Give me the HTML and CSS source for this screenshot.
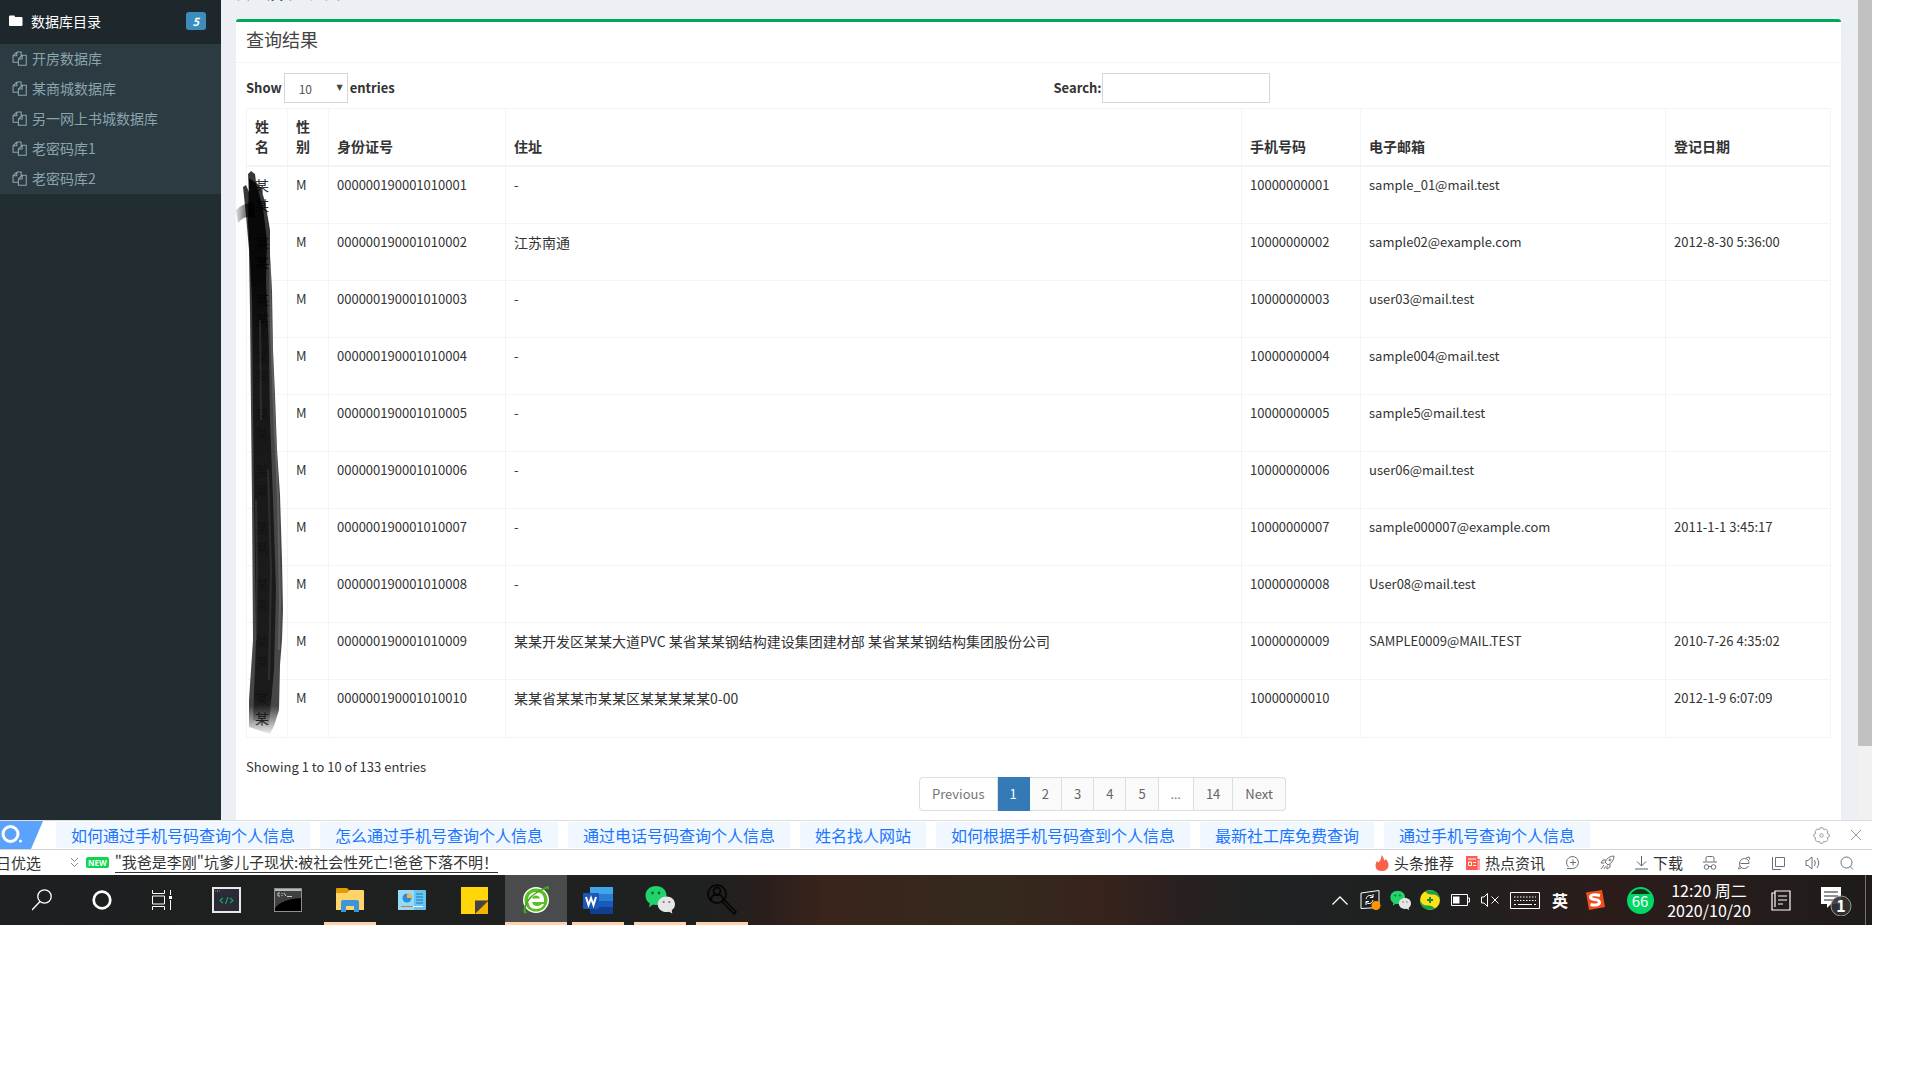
FILE: index.html
```
<!DOCTYPE html>
<html lang="zh-CN">
<head>
  <meta charset="UTF-8" />
  <meta name="viewport" content="width=device-width, initial-scale=1.0"/>
  <title>查询结果</title>
  <link rel="stylesheet" href="styles.css">
</head>
<body>

<svg class="defs" aria-hidden="true">
  <symbol id="copy" viewBox="0 0 14 14">
    <path d="M4.5 1H8.5V4.5M4.500 1 1 4.500V10.500H5.500M4.500 1V4.500H1M9.500 4H13.300V13.300H6V7.500ZM9.500 4V7.500H6" fill="none" stroke="currentColor"/>
  </symbol>
  <symbol id="wechat" viewBox="0 0 30 30">
    <path d="M11 1c6 0 10.500 4 10.500 9.500S17 20 11 20c-1 0-2 0-3-.4L4 22.500l.8-4C2 16.500.5 14 .5 10.500.5 5 5 1 11 1z" fill="#22d36b"/>
    <path d="M21.500 11.500c5 0 8.500 3.400 8.500 7.700 0 2.500-1.300 4.600-3.300 6l.6 3.300-3.300-1.800c-.8.200-1.600.3-2.500.3-5 0-8.800-3.400-8.800-7.800s3.800-7.700 8.800-7.700z" fill="#e6e6e6"/>
    <g fill="#0a6b39"><circle cx="7.500" cy="8" r="1.400"/><circle cx="14" cy="8" r="1.400"/></g>
    <g fill="#777"><circle cx="18.700" cy="17" r="1.100"/><circle cx="24.300" cy="17" r="1.100"/></g>
  </symbol>
</svg>

<div class="screen">
  <div class="viewport">

    <aside class="sidebar">
      <a class="menu-head" href="#">
        <svg width="14" height="12" viewBox="0 0 14 12"><path d="M0 1.500Q0 .5 1 .5H5Q6 .5 6 1.500V2H12.500Q13.500 2 13.500 3V10Q13.500 11 12.500 11H1Q0 11 0 10Z" fill="#fff"/></svg>
        <span>数据库目录</span>
        <em class="badge">5</em>
      </a>
      <nav class="submenu">
        <a href="#"><svg width="15" height="15"><use href="#copy"/></svg>开房数据库</a>
        <a href="#"><svg width="15" height="15"><use href="#copy"/></svg>某商城数据库</a>
        <a href="#"><svg width="15" height="15"><use href="#copy"/></svg>另一网上书城数据库</a>
        <a href="#"><svg width="15" height="15"><use href="#copy"/></svg>老密码库1</a>
        <a href="#"><svg width="15" height="15"><use href="#copy"/></svg>老密码库2</a>
      </nav>
    </aside>

    <main class="content">
      <h1>数据表列表</h1>
      <section class="box">
        <h3 class="box-title">查询结果</h3>
        <div class="box-body">
          <div class="filters">
            <label>Show
              <span class="select"><select><option>10</option><option>25</option><option>50</option></select></span>
              entries
            </label>
            <label class="search">Search:<input type="search"></label>
          </div>

          <div class="table-wrap">
            <table>
              <thead>
                <tr>
                  <th class="w-xs">姓名</th>
                  <th class="w-xs">性别</th>
                  <th class="w-id">身份证号</th>
                  <th>住址</th>
                  <th class="w-phone">手机号码</th>
                  <th class="w-mail">电子邮箱</th>
                  <th class="w-date">登记日期</th>
                </tr>
              </thead>
              <tbody>
                <tr><td class="zh">某某</td><td>M</td><td>000000190001010001</td><td>-</td><td>10000000001</td><td>sample_01@mail.test</td><td></td></tr>
                <tr><td class="zh">某某</td><td>M</td><td>000000190001010002</td><td class="zh">江苏南通</td><td>10000000002</td><td>sample02@example.com</td><td>2012-8-30 5:36:00</td></tr>
                <tr><td class="zh">某某</td><td>M</td><td>000000190001010003</td><td>-</td><td>10000000003</td><td>user03@mail.test</td><td></td></tr>
                <tr><td class="zh">某某</td><td>M</td><td>000000190001010004</td><td>-</td><td>10000000004</td><td>sample004@mail.test</td><td></td></tr>
                <tr><td class="zh">某某</td><td>M</td><td>000000190001010005</td><td>-</td><td>10000000005</td><td>sample5@mail.test</td><td></td></tr>
                <tr><td class="zh">某某</td><td>M</td><td>000000190001010006</td><td>-</td><td>10000000006</td><td>user06@mail.test</td><td></td></tr>
                <tr><td class="zh">某某</td><td>M</td><td>000000190001010007</td><td>-</td><td>10000000007</td><td>sample000007@example.com</td><td>2011-1-1 3:45:17</td></tr>
                <tr><td class="zh">某某</td><td>M</td><td>000000190001010008</td><td>-</td><td>10000000008</td><td>User08@mail.test</td><td></td></tr>
                <tr><td class="zh">某某</td><td>M</td><td>000000190001010009</td><td class="zh">某某开发区某某大道PVC 某省某某钢结构建设集团建材部 某省某某钢结构集团股份公司</td><td>10000000009</td><td>SAMPLE0009@MAIL.TEST</td><td>2010-7-26 4:35:02</td></tr>
                <tr><td class="zh">某某</td><td>M</td><td>000000190001010010</td><td class="zh">某某省某某市某某区某某某某某0-00</td><td>10000000010</td><td></td><td>2012-1-9 6:07:09</td></tr>
              </tbody>
            </table>

            <!-- brush stroke over the name column -->
            <svg class="brush" width="62" height="566" viewBox="0 0 62 566">
              <defs>
                <linearGradient id="ink" x1="0" y1="0" x2="0" y2="1">
                  <stop offset="0" stop-color="#000"/><stop offset=".18" stop-color="#000"/>
                  <stop offset=".35" stop-color="#101010"/><stop offset=".9" stop-color="#141414"/>
                  <stop offset=".95" stop-color="#111"/><stop offset="1" stop-color="#111" stop-opacity=".1"/>
                </linearGradient>
                <linearGradient id="smear" x1="0" y1="0" x2="1" y2="0">
                  <stop offset="0" stop-color="#222" stop-opacity=".15"/><stop offset="1" stop-color="#000"/>
                </linearGradient>
              </defs>
              <path d="M0 40Q7 33 18 32L19 48Q9 44 2 53Z" fill="url(#smear)"/>
              <path d="M12 4 15 1 19 4 20 12 25 18 29 32 32 48 34 60 34 85 36 121 37 180 39 225 41 280 44 325 46 390 47 440 46 470 44 495 43 540 38 556 34 564 13 557 13 530 17 470 16 330 15 240 14 140 13 80 10 45 7 17 10 15 13 22Z" fill="url(#ink)" opacity=".78"/>
              <path d="M13 8 20 13 27 38 31 70 30 110 33 180 34 250 37 330 40 420 38 500 33 555 17 550 20 470 18 330 17 240 16 130 12 50Z" fill="url(#ink)" opacity=".85"/>
              <path d="M34 95 35 160 38 240 42 330 44 430 43 480" fill="none" stroke="#888" stroke-width="2" opacity=".4"/>
              <path d="M20 330 21 400 20 470M32 300 35 400 33 510M24 150 25 250" fill="none" stroke="#555" stroke-width="2" opacity=".35"/>
            </svg>
          </div>

          <div class="table-foot">
            <p>Showing 1 to 10 of 133 entries</p>
            <nav class="pages">
              <button class="off">Previous</button>
              <button class="active">1</button>
              <button>2</button>
              <button>3</button>
              <button>4</button>
              <button>5</button>
              <button class="off dots">…</button>
              <button>14</button>
              <button>Next</button>
            </nav>
          </div>
        </div>
      </section>
    </main>

    <div class="scrollbar"><div class="thumb"></div></div>
  </div>

  <!-- related searches -->
  <div class="related">
    <svg width="43" height="28" viewBox="0 0 43 28">
      <path d="M0 0H43L31 28H0Z" fill="#5aa2fc"/>
      <circle cx="10.500" cy="13" r="7.500" fill="none" stroke="#fff" stroke-width="3"/>
      <circle cx="20.500" cy="20" r="1.500" fill="#fff"/>
    </svg>
    <div class="chips">
      <a href="#">如何通过手机号码查询个人信息</a>
      <a href="#">怎么通过手机号查询个人信息</a>
      <a href="#">通过电话号码查询个人信息</a>
      <a href="#">姓名找人网站</a>
      <a href="#">如何根据手机号码查到个人信息</a>
      <a href="#">最新社工库免费查询</a>
      <a href="#">通过手机号查询个人信息</a>
    </div>
    <div class="related-tools">
      <button aria-label="设置"><svg width="17" height="17" viewBox="0 0 17 17" fill="none" stroke="#999"><path d="M6.300 2.500 7.300.7H9.700L10.700 2.500 12.700 2 14.800 4.200 14.300 6.300 16.200 7.300V9.700L14.300 10.700 14.800 12.800 12.800 14.900 10.700 14.400 9.700 16.300H7.300L6.300 14.400 4.200 14.900 2.200 12.800 2.700 10.700.8 9.700V7.300L2.700 6.300 2.200 4.200 4.200 2Z" stroke-linejoin="round"/><circle cx="8.500" cy="8.500" r="1.700"/></svg></button>
      <button aria-label="关闭"><svg width="12" height="12" viewBox="0 0 12 12" stroke="#999"><path d="M1 1 11 11M11 1 1 11"/></svg></button>
    </div>
  </div>

  <!-- browser status bar -->
  <div class="statusbar">
    <a class="pick" href="#">日优选</a>
    <svg width="9" height="11" viewBox="0 0 9 11" fill="none" stroke="#888"><path d="M1 1 4.500 4.500 8 1M1 6 4.500 9.500 8 6"/></svg>
    <b class="new">NEW</b>
    <a class="headline" href="#">"我爸是李刚"坑爹儿子现状:被社会性死亡!爸爸下落不明！</a>
    <div class="status-tools">
      <a class="feed" href="#"><svg width="14" height="16" viewBox="0 0 14 16"><path d="M6.500 0C9 2.500 8.500 4 9.500 5.500L11 4Q14 8 13.500 11 12.500 16 7 16 .5 16 .5 10.500.5 8 2 6L3.500 7.500Q6.500 4.500 6.500 0Z" fill="#fb6148"/></svg>头条推荐</a>
      <a class="feed" href="#"><svg width="14" height="14" viewBox="0 0 14 14"><path d="M0 0H11.500V3H14V14H0Z" fill="#fb5b50"/><path d="M11.500 4H14V14H11.500Z" fill="#fda39c"/><path d="M2 3H10M2.500 6H5.500V9.500H2.500ZM7 6.500H10M7 9.500H10" fill="none" stroke="#fff"/></svg>热点资讯</a>
      <button aria-label="加速"><svg width="15" height="15" viewBox="0 0 15 15" fill="none" stroke="#6b6f76"><path d="M3.500 12A6 6 0 1 1 7.500 13.500H2M8 4.500V10.500M5 7.500H11"/></svg></button>
      <button aria-label="火箭"><svg width="15" height="15" viewBox="0 0 15 15" fill="none" stroke="#6b6f76"><path d="M14 1Q8 1 5 7L8 10Q14 7 14 1ZM6 5H3L1 8 4.500 8M10 9V12L7 14 7 10.500M4 10 1 14M5.500 11.500 4 14"/><circle cx="10" cy="5" r="1"/></svg></button>
      <a class="feed" href="#"><svg width="13" height="14" viewBox="0 0 13 14" fill="none" stroke="#5b5f66"><path d="M6.500 0V10M2 5.500 6.500 10 11 5.500M0 13H13"/></svg>下载</a>
      <button aria-label="无痕"><svg width="14" height="14" viewBox="0 0 14 14" fill="none" stroke="#6b6f76"><path d="M3 5.500V2Q3 .5 4.500.5H9.500Q11 .5 11 2V5.500M0 6H14M5 10.500H9"/><circle cx="3.500" cy="11" r="2.300"/><circle cx="10.500" cy="11" r="2.300"/></svg></button>
      <button aria-label="浏览器模式"><svg width="14" height="14" viewBox="0 0 14 14" fill="none" stroke="#6b6f76"><path d="M3.500 7.500H12Q12 2.500 7.500 2.500 2.500 3 2.500 8 3 12.500 7.500 12.500 10.500 12.500 11.500 10M2.500 10.500Q0 14.500 4 12M9 2Q13.500-.5 12.500 3.500"/></svg></button>
      <button aria-label="窗口"><svg width="14" height="14" viewBox="0 0 14 14" fill="none" stroke="#6b6f76"><path d="M4.500 1.500H13.500V10.500H4.500ZM1.500 1V13.500H10"/></svg></button>
      <button aria-label="声音"><svg width="15" height="14" viewBox="0 0 15 14" fill="none" stroke="#6b6f76"><path d="M1 4.500H3L7 1V13L3 9.500H1ZM9.500 4Q11 7 9.500 10M12 2Q15.500 7 12 12"/></svg></button>
      <button aria-label="查找"><svg width="14" height="14" viewBox="0 0 14 14" fill="none" stroke="#6b6f76"><circle cx="6.500" cy="6.500" r="5.500"/><path d="M10 10.500 13 13.500"/></svg></button>
    </div>
  </div>

  <!-- taskbar -->
  <div class="taskbar">
    <div class="launch">
      <button aria-label="搜索"><svg width="20" height="22" viewBox="0 0 20 22" fill="none" stroke="#fff" stroke-width="1.300"><circle cx="12.500" cy="7.500" r="6.700"/><path d="M8 12.500 0 21"/></svg></button>
      <button aria-label="Cortana"><svg width="20" height="20" viewBox="0 0 20 20"><circle cx="10" cy="10" r="8.300" fill="none" stroke="#fff" stroke-width="2.700"/></svg></button>
      <button aria-label="任务视图"><svg width="21" height="20" viewBox="0 0 21 20" fill="none" stroke="#fff"><path d="M.5 0V3.500H12.500V0M.5 6H12.500V14H.5ZM.5 20V16.500H12.500V20M18.500 0V5M18.500 10V20"/><path d="M17 6H20V9H17Z" fill="#fff" stroke="none"/></svg></button>
    </div>
    <div class="apps">
      <button aria-label="代码"><svg width="29" height="26" viewBox="0 0 29 26"><path d="M1 1H28V25H1Z" fill="#2b2a36" stroke="#e9e9e9" stroke-width="2"/><path d="M11 11 8 13.500 11 16M18 11 21 13.500 18 16M16 10 13.500 17" fill="none" stroke="#14a76c" stroke-width="1.200"/><path d="M3 4H4" stroke="#f44"/><path d="M5 4H6" stroke="#fb2"/><path d="M7 4H8" stroke="#2b5"/></svg></button>
      <button aria-label="命令提示符"><svg width="28" height="24" viewBox="0 0 28 24"><rect x=".5" y=".5" width="27" height="23" fill="#000" stroke="#8c9094"/><path d="M1 3H27V10Q8 11 1 20Z" fill="#404040"/><path d="M1 2H27" stroke="#b8bcc0" stroke-width="2"/><path d="M6 5H4V8H6M8 5V6M8 7V8M10 5 12 8M13 8.500H18" stroke="#ccc" fill="none"/></svg></button>
      <button class="open" aria-label="文件资源管理器"><svg width="28" height="24" viewBox="0 0 28 24"><path d="M0 1Q0 0 1 0H11L14 3 11 6H0Z" fill="#e09b07"/><path d="M0 5H11L14 2H27Q28 2 28 3V22H0Z" fill="#ffd468"/><path d="M5 24V14Q5 12 7 12H21Q23 12 23 14V24H18V18H10V24Z" fill="#3d95dc"/></svg></button>
      <button aria-label="控制面板"><svg width="28" height="20" viewBox="0 0 28 20"><rect width="28" height="20" rx="1" fill="#69c5ef"/><path d="M0 0H16V20H0Z" fill="#93dbf8"/><circle cx="9" cy="8" r="4.500" fill="#2a8fd8"/><path d="M9 8V3A5 5 0 0 1 14 8Z" fill="#f7b33d"/><path d="M18 4H25M18 7H25M18 10H25M18 13H25" stroke="#1c78b8"/><path d="M3 16.500H15" stroke="#d77b1e"/><path d="M15 16.500H25" stroke="#fff"/></svg></button>
      <button aria-label="便笺"><svg width="27" height="27" viewBox="0 0 27 27"><path d="M0 0H27V13L14 27H0Z" fill="#ffd60a"/><path d="M14 13.500H27L14 27Z" fill="#444"/><path d="M27 14V27H14Z" fill="#f5b400"/></svg></button>
      <button class="open current" aria-label="浏览器"><svg width="30" height="30" viewBox="0 0 30 30"><circle cx="15" cy="15" r="13" fill="#fff"/><circle cx="15" cy="15" r="11.500" fill="#5abf22"/><path d="M7 14Q8 7 15 7 22 7 23 14V17H11Q12 21 16 21 19 21 21 19H23Q21 24 15 24 7 24 7 14ZM11 13.500H19Q18 10.500 15 10.500 12 10.500 11 13.500Z" fill="#fff"/><path d="M21 4Q31-3 27 6 28 2 22 5 12 9 7 17 3 24 6 28 1 30 3 22 7 10 21 4Z" fill="#3fa817"/></svg></button>
      <button class="open" aria-label="Word"><svg width="30" height="27" viewBox="0 0 30 27"><path d="M7 0H30V7H7Z" fill="#41a5ee"/><path d="M7 7H30V14H7Z" fill="#2b7cd3"/><path d="M7 14H30V20H7Z" fill="#185abd"/><path d="M7 20H30V27H7Z" fill="#103f91"/><rect y="6" width="16" height="16" rx="1" fill="#1a56b4"/><path d="M3 10 5.500 18 8 11 10.500 18 13 10" fill="none" stroke="#fff" stroke-width="2"/></svg></button>
      <button class="open" aria-label="微信"><svg width="30" height="30"><use href="#wechat"/></svg></button>
      <button class="open" aria-label="人员查找"><svg width="30" height="32" viewBox="0 0 30 32" fill="none" stroke="#060606" stroke-width="1.800"><circle cx="10" cy="10" r="9"/><circle cx="10" cy="7" r="3.500"/><path d="M4 16Q4 10.500 10 11 16 10.500 16 16M15.500 18 27 30 29 28 17.500 16"/></svg></button>
    </div>

    <div class="tray">
      <button aria-label="显示隐藏的图标"><svg width="16" height="9" viewBox="0 0 16 9" fill="none" stroke="#fff" stroke-width="1.300"><path d="M.5 8.500 8 1 15.500 8.500"/></svg></button>
      <button aria-label="更新"><svg width="21" height="20" viewBox="0 0 21 20" fill="none" stroke="#fff"><path d="M1 3 19 .5V17.500L1 18.500ZM6 9Q7 5 11 5.500L13 7M13 4V7.500H10M13 10Q12 14 8 13.500L6 12M6 15V11.500H9"/><circle cx="16" cy="15.500" r="4.500" fill="#ff9500" stroke="none"/></svg></button>
      <button aria-label="微信"><svg width="21" height="21"><use href="#wechat"/></svg></button>
      <button aria-label="安全卫士"><svg width="20" height="20" viewBox="0 0 20 20"><circle cx="10" cy="10" r="10" fill="#ffe11a"/><path d="M5 1.500A10 10 0 0 1 20 10Q18 4 12 4.500 8 5 5 1.500ZM15 18.500A10 10 0 0 1 0 10Q2 16 8 15.500 12 15 15 18.500Z" fill="#17a34a"/><path d="M10 7V13M7 10H13" stroke="#118a3a" stroke-width="2"/></svg></button>
      <button aria-label="电池"><svg width="19" height="12" viewBox="0 0 19 12"><path d="M.5.5H16.500V11.500H.5ZM17 4H18.500V8H17" fill="none" stroke="#fff"/><path d="M2 2.500H8.500V9.500H2Z" fill="#fff"/></svg></button>
      <button aria-label="静音"><svg width="18" height="14" viewBox="0 0 18 14" fill="none" stroke="#fff"><path d="M.5 4H3L6.500.5V13.500L3 10H.5ZM10.500 3.500 17.500 10.500M17.500 3.500 10.500 10.500"/></svg></button>
      <button class="w40" aria-label="触摸键盘"><svg width="30" height="17" viewBox="0 0 30 17" fill="none" stroke="#fff"><path d="M.5.5H29.500V16.500H.5Z"/><path d="M4 5H26M4 8.500H26" stroke-dasharray="1.500 1.500"/><path d="M4 12.500H6M8 12.500H22M24 12.500H26"/></svg></button>
      <button class="ime">英</button>
      <button class="w40" aria-label="搜狗输入法"><svg width="20" height="20" viewBox="0 0 20 20"><path d="M1 2.500 17 0 20 17 4 20Z" fill="#f04e1d"/><path d="M15 5.500Q6 3.500 5.500 7 5.500 9 10 9.500 15 10 14.500 13 13 16 5.500 14.500" fill="none" stroke="#fff" stroke-width="3"/></svg></button>
      <button class="w50"><span class="score">66</span></button>
      <button class="clock">12:20 周二<br>2020/10/20</button>
      <button class="w56" aria-label="资讯"><svg width="20" height="21" viewBox="0 0 20 21" fill="none" stroke="#fff" stroke-width="1.200"><path d="M4 1H19V20H1V3H4ZM4 3V17M7 6H16M7 10H16M7 14H12"/></svg></button>
      <button class="w56" aria-label="通知"><svg width="32" height="32" viewBox="0 0 32 32"><path d="M0 3H20V20H10L6 24V20H0Z" fill="#fff"/><path d="M3 8H17M3 12H17M3 16H17" stroke="#222"/><circle cx="20" cy="22" r="10" fill="#333" fill-opacity=".9" stroke="#999"/><text class="count" x="20" y="28" text-anchor="middle">1</text></svg></button>
    </div>
  </div>
</div>

</body>
</html>
```
FILE: styles.css
```
* {
  box-sizing: border-box;
}
body {
  margin: 0;
  background: #fff;
  color: #333;
  font-family: "Noto Sans CJK SC", sans-serif;
  font-size: 14px;
  line-height: 20px;
}
a {
  color: inherit;
  text-decoration: none;
}
button {
  padding: 0;
  border: none;
  background: none;
  color: inherit;
  font: inherit;
}
svg {
  flex: none;
}
.defs {
  position: absolute;
  width: 0;
  height: 0;
}
.screen {
  margin-right: 48px;
  overflow: hidden;
}

/* page area */
.viewport {
  display: flex;
  background: #ecf0f5;
}
.sidebar {
  flex: none;
  width: 221px;
  background: #222d32;
}
.menu-head {
  display: flex;
  align-items: center;
  gap: 8px;
  padding: 11px 15px 13px 9px;
  background: #1e282c;
  color: #fff;
}
.badge {
  margin-left: auto;
  padding: 0 7px;
  border-radius: 3px;
  background: #3c8dbc;
  font-size: 11px;
  font-weight: bold;
  line-height: 18px;
}
.submenu {
  background: #2c3b41;
  color: #8aa4af;
}
.submenu a {
  display: flex;
  align-items: center;
  gap: 5px;
  padding: 4px 12px 6px;
}
.content {
  flex: 1;
  min-width: 0;
  padding: 0 17px 0 15px;
}
h1 {
  margin: -26px 0 17px;
  font-size: 24px;
  font-weight: 500;
  line-height: 28px;
}
.box {
  border-top: 3px solid #00a65a;
  border-radius: 3px 3px 0 0;
  background: #fff;
}
.box-title {
  margin: 0;
  padding: 7px 10px 13px;
  border-bottom: 1px solid #f4f4f4;
  color: #444;
  font-size: 18px;
  font-weight: normal;
}
.box-body {
  padding: 10px 10px 9px;
}
.filters {
  display: grid;
  grid-template-columns: 1fr 1fr;
  gap: 30px;
  font-size: 13px;
  font-weight: bold;
}
.filters label {
  display: flex;
  align-items: center;
  gap: 2px;
  height: 30px;
  line-height: 20px;
}
.filters .search {
  gap: 0;
}
.filters select,
.filters input {
  height: 30px;
  border: 1px solid #d2d6de;
  border-radius: 0;
  background: #fff;
  color: #555;
  font-family: inherit;
  font-size: 12px;
}
.select {
  position: relative;
}
.select::after {
  content: "▼";
  position: absolute;
  top: 5px;
  right: 5px;
  color: #444;
  font-family: "DejaVu Sans", sans-serif;
  font-size: 8px;
  pointer-events: none;
}
.filters select {
  appearance: none;
  width: 64px;
  padding: 0 14px;
}
.filters input {
  width: 168px;
  padding: 5px 10px;
}

.table-wrap {
  position: relative;
  margin-top: 5px;
}
table {
  width: 100%;
  border: 1px solid #f4f4f4;
  border-collapse: separate;
  border-spacing: 0;
  table-layout: fixed;
}
th,
td {
  padding: 8px;
  border: 0 solid #f4f4f4;
  border-right-width: 1px;
  border-bottom-width: 1px;
  text-align: left;
  vertical-align: top;
}
th:last-child,
td:last-child {
  border-right-width: 0;
}
th {
  padding: 7px 8px 9px;
  border-bottom-width: 2px;
  vertical-align: bottom;
}
td {
  height: 57px;
  font-size: 13px;
}
.zh {
  font-size: 14px;
}
tbody tr:last-child td {
  border-bottom-width: 0;
}
.w-xs {
  width: 41px;
}
.w-id {
  width: 177px;
}
.w-phone {
  width: 119px;
}
.w-mail {
  width: 305px;
}
.w-date {
  width: 164px;
}
.brush {
  position: absolute;
  top: 62px;
  left: -10px;
}

.table-foot {
  display: grid;
  grid-template-columns: 5fr 7fr;
  margin: 19px -15px 0;
  font-size: 13px;
}
.table-foot p {
  margin: 0;
  padding-left: 15px;
}
.pages {
  display: flex;
  margin-top: 20px;
  padding-left: 15px;
}
.pages button {
  height: 34px;
  padding: 0 12px;
  border: 1px solid #ddd;
  border-left-width: 0;
  background: #fafafa;
  color: #666;
}
.pages button:first-child {
  border-left-width: 1px;
  border-radius: 4px 0 0 4px;
}
.pages button:last-child {
  border-radius: 0 4px 4px 0;
}
.pages .off {
  background: #fff;
  color: #777;
}
.pages .active {
  border-color: #337ab7;
  background: #337ab7;
  color: #fff;
}
.pages .dots {
  font-family: "Noto Sans", sans-serif;
}
.scrollbar {
  flex: none;
  width: 14px;
  background: #f1f1f1;
}
.thumb {
  height: 91%;
  background: #c1c1c1;
}

/* related searches */
.related {
  display: flex;
  align-items: center;
  border-top: 1px solid #ddd;
  border-bottom: 1px solid #d5d5d5;
}
.chips {
  display: flex;
  gap: 10px;
  margin-left: 13px;
}
.chips a {
  padding: 0 15px;
  border-radius: 2px;
  background: #f0f7ff;
  color: #1a75ff;
  font-size: 16px;
  line-height: 26px;
  white-space: nowrap;
}
.related-tools {
  display: flex;
  align-items: center;
  gap: 20px;
  margin-left: auto;
  padding-right: 10px;
}
.related-tools button,
.status-tools button {
  display: flex;
}

/* status bar */
.statusbar {
  display: flex;
  align-items: center;
  height: 25px;
  font-size: 15px;
  white-space: nowrap;
}
.pick {
  margin-left: -4px;
  margin-right: 29px;
}
.new {
  margin: 0 6px 0 7px;
  padding: 0 2px;
  border-radius: 2px;
  background: #0fd64f;
  color: #fff;
  font-family: "Open Sans", sans-serif;
  font-size: 8px;
  line-height: 11px;
}
.headline {
  border-bottom: 1px solid #333;
}
.status-tools {
  display: flex;
  align-items: center;
  gap: 20px;
  margin-left: auto;
  padding-right: 18px;
}
.feed {
  display: flex;
  align-items: center;
  gap: 5px;
}
.feed + .feed {
  margin-left: -8px;
}

/* taskbar */
.taskbar {
  display: flex;
  height: 50px;
  padding-left: 12px;
  background: linear-gradient(90deg, #1e1f20 0, #1f2120 38%, #2a1e1c 41%, #3a241c 44%, #35291d 53%, #37231c 59%, #292020 63%, #1f2222 68%, #1f2121 76%, #2b1c1a 86%, #261d1b 93%, #1e1b19 100%);
  color: #fff;
}
.launch,
.apps,
.tray {
  display: flex;
}
.apps {
  margin-left: 3px;
}
.taskbar button {
  display: flex;
  align-items: center;
  justify-content: center;
  width: 30px;
}
.taskbar .launch button {
  width: 60px;
}
.taskbar .apps button {
  width: 62px;
  padding-top: 3px;
  border-bottom: 3px solid transparent;
}
.taskbar .apps .open {
  width: 52px;
  margin: 0 5px;
  border-color: #ffd2ac;
}
.taskbar .apps .current {
  width: 62px;
  margin: 0;
  background: #4a4b4c;
}
.tray {
  margin-left: auto;
  margin-right: 6px;
  border-right: 1px solid #77706e;
}
.taskbar .w40 {
  width: 40px;
}
.taskbar .w50 {
  width: 50px;
}
.taskbar .w56 {
  width: 56px;
}
.taskbar .ime {
  font-size: 16px;
  font-weight: bold;
}
.score {
  width: 27px;
  border: 2px solid #00d866;
  border-radius: 50%;
  background: linear-gradient(#17301f 20%, #00d866 20%);
  font-size: 15px;
  line-height: 23px;
}
.taskbar .clock {
  width: 88px;
  font-size: 16px;
  text-align: center;
}
.count {
  fill: #fff;
  font-size: 16px;
  font-weight: bold;
}
```
